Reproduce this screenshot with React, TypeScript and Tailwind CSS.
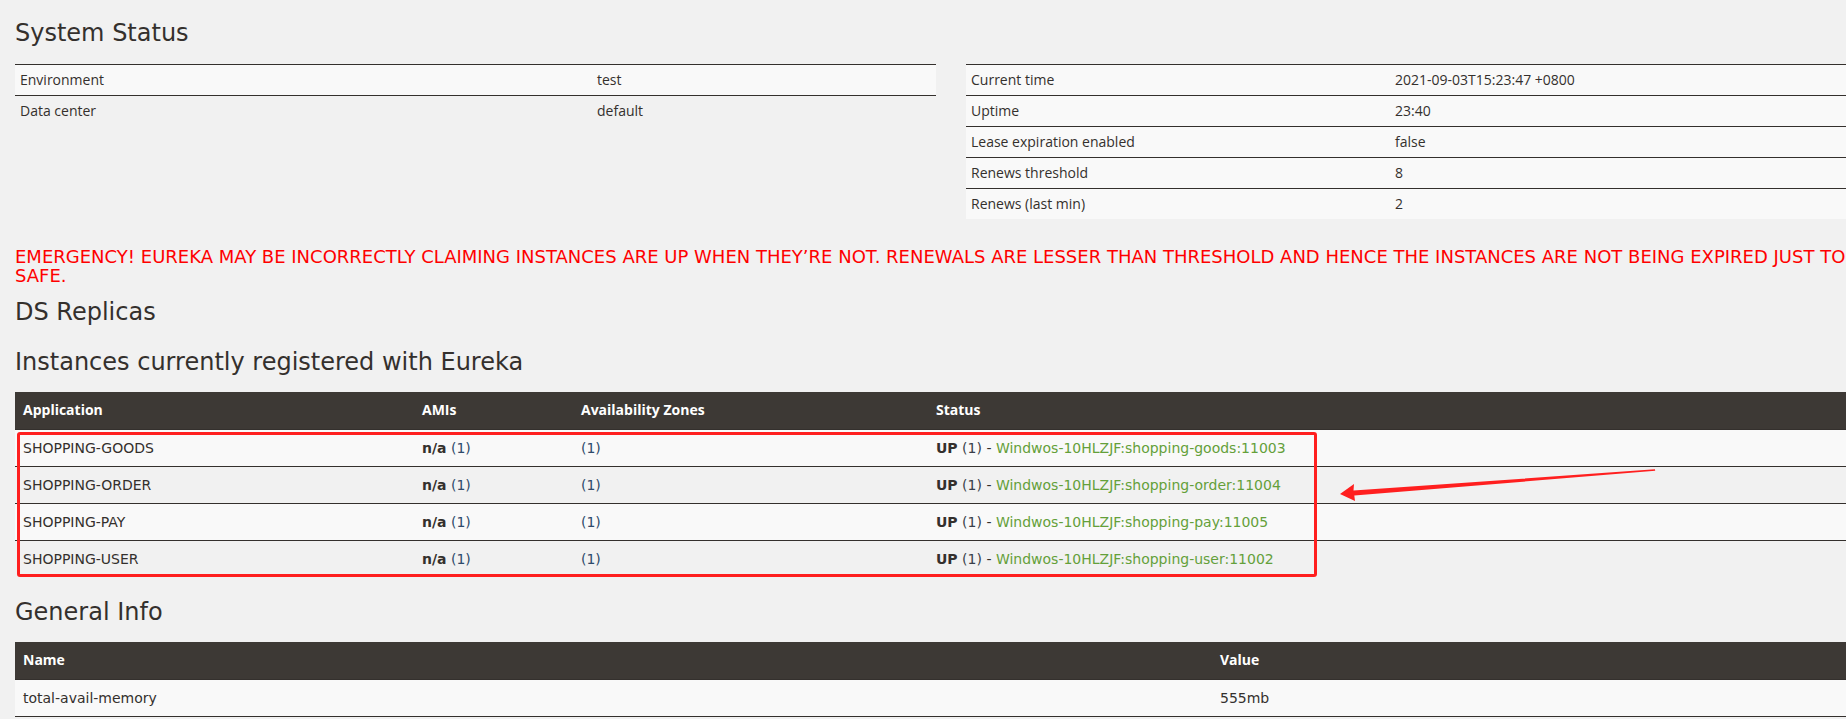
const HEADING = "m-0 font-['DejaVu_Sans',sans-serif] text-[24px] font-normal leading-[26px] text-[#34302d]";

const envRows = [
  ["Environment", "test"],
  ["Data center", "default"],
];

const statusRows = [
  ["Current time", "2021-09-03T15:23:47 +0800"],
  ["Uptime", "23:40"],
  ["Lease expiration enabled", "false"],
  ["Renews threshold", "8"],
  ["Renews (last min)", "2"],
];

const instances = [
  { app: "SHOPPING-GOODS", id: "Windwos-10HLZJF:shopping-goods:11003" },
  { app: "SHOPPING-ORDER", id: "Windwos-10HLZJF:shopping-order:11004" },
  { app: "SHOPPING-PAY", id: "Windwos-10HLZJF:shopping-pay:11005" },
  { app: "SHOPPING-USER", id: "Windwos-10HLZJF:shopping-user:11002" },
];

const generalInfo = [
  ["total-avail-memory", "555mb"],
  ["environment", "test"],
  ["num-of-cpus", "8"],
  ["current-memory-usage", "98mb (17%)"],
  ["server-uptime", "00:23"],
];

function InfoTable({ rows, labelWidth, striped }: { rows: string[][]; labelWidth: string; striped: boolean }) {
  return (
    <table className="w-full table-fixed border-separate border-spacing-0 font-['Open_Sans',sans-serif] text-[14px] leading-[20px] text-[#34302d]">
      <colgroup>
        <col className={labelWidth} />
        <col />
      </colgroup>
      <tbody>
        {rows.map(([k, v], i) => (
          <tr key={k} className={!striped || i % 2 === 0 ? "bg-[#f9f9f9]" : ""}>
            <td className="border-t border-[#34302d] p-[5px]">{k}</td>
            <td className="border-t border-[#34302d] p-[5px]">{v}</td>
          </tr>
        ))}
      </tbody>
    </table>
  );
}

export default function App() {
  return (
    <div className="h-[719px] w-full overflow-hidden bg-[#f1f1f1]">
      <div className="w-[1902px] px-[15px] pt-[20px]">
        <h2 className={HEADING}>System Status</h2>

        <div className="mt-[18px] grid grid-cols-2 items-start gap-[30px]">
          <InfoTable rows={envRows} labelWidth="w-[577px]" striped />
          <InfoTable rows={statusRows} labelWidth="w-[424px]" striped={false} />
        </div>

        <h4 className="m-0 mt-[28px] font-['DejaVu_Sans',sans-serif] text-[18px] font-normal leading-[19px] text-[#ff0000]">
          EMERGENCY! EUREKA MAY BE INCORRECTLY CLAIMING INSTANCES ARE UP WHEN THEY’RE NOT. RENEWALS ARE LESSER THAN THRESHOLD AND HENCE THE INSTANCES ARE NOT BEING EXPIRED JUST TO BE SAFE.
        </h4>

        <h2 className={`${HEADING} mt-[14px]`}>DS Replicas</h2>
        <h2 className={`${HEADING} mt-[24px]`}>Instances currently registered with Eureka</h2>

        <div className="relative mt-[17px]">
          <table className="w-full table-fixed border-separate border-spacing-0 font-['DejaVu_Sans',sans-serif] text-[14px] leading-[20px] text-[#34302d]">
            <colgroup>
              <col className="w-[399px]" />
              <col className="w-[159px]" />
              <col className="w-[355px]" />
              <col />
            </colgroup>
            <thead>
              <tr className="bg-[#3d3935] font-['Open_Sans',sans-serif] font-bold text-white">
                <th className="px-[8px] pt-[8px] pb-[9px] text-left">Application</th>
                <th className="px-[8px] pt-[8px] pb-[9px] text-left">AMIs</th>
                <th className="px-[8px] pt-[8px] pb-[9px] text-left">Availability Zones</th>
                <th className="px-[8px] pt-[8px] pb-[9px] text-left">Status</th>
              </tr>
            </thead>
            <tbody>
              {instances.map((it, i) => (
                <tr key={it.app} className={i % 2 === 0 ? "bg-[#f9f9f9]" : ""}>
                  <td className="border-t border-[#34302d] p-[8px]">{it.app}</td>
                  <td className="border-t border-[#34302d] p-[8px]">
                    <b>n/a</b> <span className="text-[#2e4a6a]">(1)</span>
                  </td>
                  <td className="border-t border-[#34302d] p-[8px]">
                    <span className="text-[#2e4a6a]">(1)</span>
                  </td>
                  <td className="border-t border-[#34302d] p-[8px]">
                    <b>UP</b> <span className="text-[#3a3f4a]">(1)</span> - <a className="text-[#64a03a]">{it.id}</a>
                  </td>
                </tr>
              ))}
            </tbody>
          </table>

          {/* screenshot annotation: red box + arrow */}
          <div className="pointer-events-none absolute left-[2px] top-[40px] h-[145px] w-[1300px] rounded-[3px] border-[3px] border-[#ff1f1f]" />
          <svg className="pointer-events-none absolute left-[1320px] top-[70px]" width="330" height="45" viewBox="0 0 330 45">
            <polygon
              points="5,32 19,22 18.5,28.6 320,7.3 320.2,8.8 19.3,33.6 20,39"
              fill="#ff1f1f"
            />
          </svg>
        </div>

        <h2 className={`${HEADING} mt-[22px]`}>General Info</h2>

        <table className="mt-[17px] w-full table-fixed border-separate border-spacing-0 font-['DejaVu_Sans',sans-serif] text-[14px] leading-[20px] text-[#34302d]">
          <colgroup>
            <col className="w-[1197px]" />
            <col />
          </colgroup>
          <thead>
            <tr className="bg-[#3d3935] font-['Open_Sans',sans-serif] font-bold text-white">
              <th className="px-[8px] pt-[8px] pb-[9px] text-left">Name</th>
              <th className="px-[8px] pt-[8px] pb-[9px] text-left">Value</th>
            </tr>
          </thead>
          <tbody>
            {generalInfo.map(([k, v], i) => (
              <tr key={k} className={i % 2 === 0 ? "bg-[#f9f9f9]" : ""}>
                <td className="border-t border-[#34302d] p-[8px]">{k}</td>
                <td className="border-t border-[#34302d] p-[8px]">{v}</td>
              </tr>
            ))}
          </tbody>
        </table>
      </div>
    </div>
  );
}
